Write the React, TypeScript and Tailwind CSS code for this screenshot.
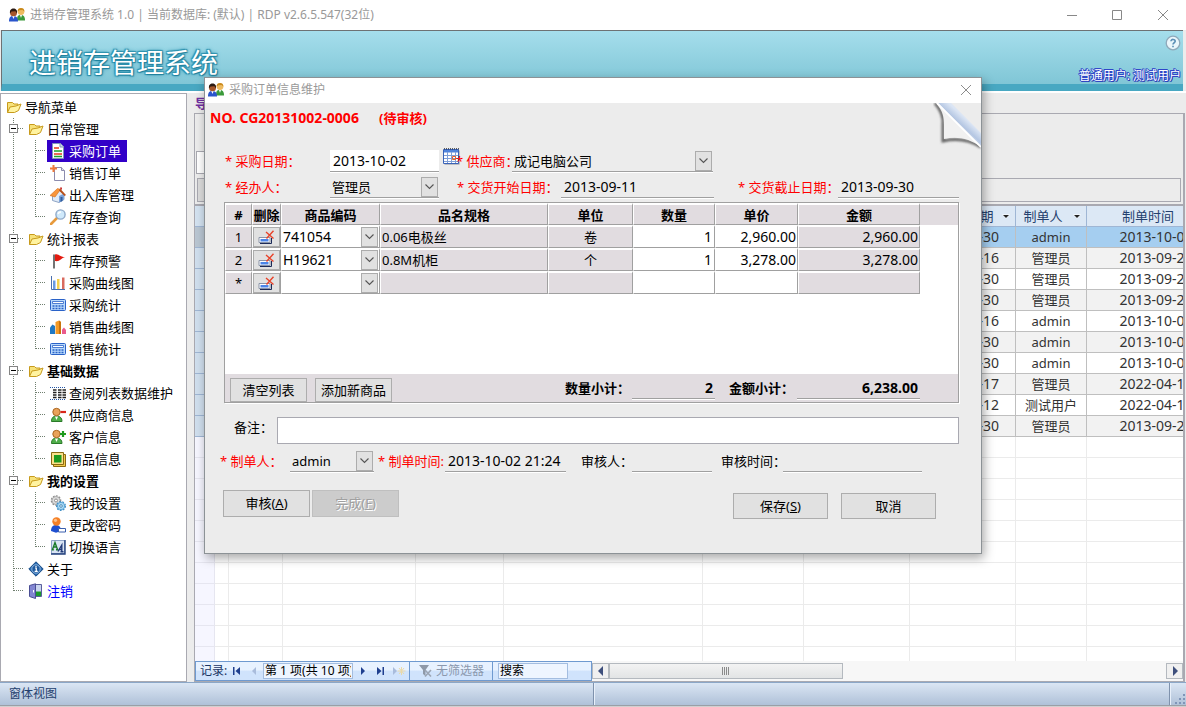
import React from "react";

type IconName =
  | "folder" | "order" | "newdoc" | "house" | "search" | "flag" | "chart" | "calc"
  | "bars" | "list" | "userMinus" | "userPlus" | "goods" | "gears" | "person" | "lang" | "about" | "door";

function Glyph({ name }: { name: IconName }) {
  switch (name) {
    case "folder":
      return (
        <>
          <path d="M1.5 13.5V3.5h5l1.5 1.5h4v2" fill="#f7e27a" stroke="#c79a1c" />
          <path d="M1.5 13.5L4 8l6-1 5-2-2.5 6.5-4 2z" fill="#fff3a0" stroke="#c79a1c" strokeLinejoin="round" />
        </>
      );
    case "order":
      return (
        <>
          <path d="M2.5.5h8l3 3v12h-11z" fill="#fff" stroke="#7f96b8" />
          <path d="M10 .5v3.500h3.500" fill="#cfd9e8" stroke="#7f96b8" />
          <path d="M4 5h5M4 11h8" stroke="#e33a1d" strokeWidth="1.300" />
          <path d="M4 8h8M4 13.500h8" stroke="#1fa32b" strokeWidth="1.300" />
        </>
      );
    case "newdoc":
      return (
        <>
          <path d="M4.500 2.500h7l3 3v10h-10z" fill="#fff" stroke="#8c8cae" />
          <path d="M11.500 2.500v3h3" fill="#dde" stroke="#8c8cae" />
          <path d="M3.500 0v7M0 3.500h7" stroke="#f07a3a" strokeWidth="2" />
        </>
      );
    case "house":
      return (
        <>
          <path d="M2.500 8v5.500L9 15.500l5-3V7L9 3z" fill="#dfeaf7" stroke="#8da3c4" />
          <path d="M9 15.500V9l5-2.500v6z" fill="#7ba3db" />
          <path d="M0 8.500L7.500 1.500l3 1L5 10z" fill="#f8953a" stroke="#d56c1a" strokeWidth=".6" />
          <path d="M10 1.500L16 8l-1.500 1L9 3.500z" fill="#b8501a" />
          <path d="M10 .5h2V3l-2-1.500z" fill="#c33" />
          <path d="M10.500 10h2v4l-2 1z" fill="#2f5d9e" />
        </>
      );
    case "search":
      return (
        <>
          <path d="M1 15l6-6" stroke="#e79a3c" strokeWidth="2.600" strokeLinecap="round" />
          <circle cx="10.500" cy="5.500" r="4.600" fill="#cfe9fb" stroke="#8fa9c9" strokeWidth="1.400" />
          <path d="M8 5a3 3 0 0 1 3-2" stroke="#fff" strokeWidth="1.400" fill="none" />
        </>
      );
    case "flag":
      return (
        <>
          <path d="M4 1.500v14" stroke="#444" strokeWidth="1.500" />
          <path d="M5 1.500c3-1.500 4 2 10 2.500-4 1-5 5-10 4z" fill="#e31b10" />
        </>
      );
    case "chart":
      return (
        <>
          <path d="M1.500 1v13.500H15" stroke="#4a6fae" fill="none" />
          <path d="M3 5.500h2.500V14H3z" fill="#6a9ae0" />
          <path d="M7 4h2.500v10H7z" fill="#f3cf4d" />
          <path d="M12 2.500h2.500V14H12z" fill="#d96a5e" />
        </>
      );
    case "calc":
      return (
        <>
          <rect x=".5" y="2.500" width="15" height="11" rx="1" fill="#b9dafc" stroke="#2a62c8" />
          <path d="M2.500 4.500h11v2h-11z" fill="#fff" stroke="#2a62c8" strokeWidth=".8" />
          <path d="M2.500 9h11M2.500 11.500h11" stroke="#2a62c8" strokeDasharray="2 1" strokeWidth="1.300" />
        </>
      );
    case "bars":
      return (
        <>
          <path d="M0 8.500l2.500-3L5 7v8H0z" fill="#1f78c4" />
          <path d="M5.500 3L9 1.500 11 3v12H5.500z" fill="#f39a26" />
          <path d="M9 1.500L11 3v12H9z" fill="#c9730d" />
          <path d="M12 10.500l2-2 2 2.500v4h-4z" fill="#ea5a8c" />
        </>
      );
    case "list":
      return (
        <>
          <path d="M0 2.500h16" stroke="#2457a8" strokeDasharray="1 1" />
          <path d="M0 14.500h16" stroke="#2457a8" strokeDasharray="1 1" />
          <path d="M3 5h3.500M8 5h3.500M12.500 5H16M3 7.500h3.500M8 7.500h3.500M12.500 7.500H16M3 10h3.500M8 10h3.500M12.500 10H16M3 12.500h3.500M8 12.500h3.500M12.500 12.500H16" stroke="#222" strokeWidth="1.300" />
        </>
      );
    case "userMinus":
    case "userPlus":
      return (
        <>
          <path d="M1.500 14.500c0-4 2-5.500 5-5.500s5.500 1.500 5.500 5.500z" fill="#4fae4a" stroke="#2a7a28" />
          <path d="M5 9.500L6.500 13 8 9.500z" fill="#fff" />
          <circle cx="6.500" cy="5" r="3.700" fill="#e9a25a" stroke="#a9651f" />
          {name === "userMinus" ? (
            <path d="M10.500 5h5.500" stroke="#d8271b" strokeWidth="2.200" />
          ) : (
            <path d="M10 5h6M13 2v6" stroke="#1d9a1d" strokeWidth="2.200" />
          )}
        </>
      );
    case "goods":
      return (
        <>
          <path d="M3.500 3.500h12v12h-12z" fill="#f2c94c" stroke="#8a6a12" />
          <path d="M1.500 1.500h12v12h-12z" fill="#fbe08a" stroke="#8a6a12" />
          <path d="M4 4h7.500v7.500H4z" fill="#1e9a1e" />
        </>
      );
    case "gears":
      return (
        <>
          <circle cx="6" cy="5.500" r="4.600" fill="none" stroke="#8d8d8d" strokeWidth="1.400" strokeDasharray="1.800 1.200" />
          <circle cx="6" cy="5.500" r="4" fill="#dedede" stroke="#9a9a9a" strokeWidth=".8" />
          <circle cx="6" cy="5.500" r="1.500" fill="#fff" stroke="#777" strokeWidth=".8" />
          <circle cx="11" cy="11" r="4.300" fill="none" stroke="#3f8fc6" strokeWidth="1.400" strokeDasharray="1.800 1.200" />
          <circle cx="11" cy="11" r="3.700" fill="#a8d8f5" stroke="#4a9bd0" strokeWidth=".8" />
          <circle cx="11" cy="11" r="1.300" fill="#fff" stroke="#2f78aa" strokeWidth=".8" />
        </>
      );
    case "person":
      return (
        <>
          <path d="M1 14c0-4 2-6 5-6s5 2 5 6l-5 1.800z" fill="#1f4fd0" />
          <circle cx="6.500" cy="4.500" r="4.200" fill="#f58026" />
          <circle cx="5.500" cy="3.300" r="1.600" fill="#fcc08a" />
          <path d="M8.500 11.500h7v3.500h-7z" fill="#fff" stroke="#3a5fae" />
        </>
      );
    case "lang":
      return (
        <>
          <path d="M1.500 1.500h13v13h-13z" fill="#d9e4f4" stroke="#8ea3c8" />
          <path d="M15 1v14H1" stroke="#23407c" strokeWidth="1.400" fill="none" />
          <path d="M2.500 10.500L5 3.500l2.500 7M3.500 8h3M1.800 10.800h2M6 10.800h2.500" stroke="#1a7a2a" strokeWidth="1.400" fill="none" />
          <path d="M8 12.500L11.800 6v6.500M9.500 10.500h2.500M10.500 12.700h3" stroke="#223a77" strokeWidth="1.400" fill="none" />
        </>
      );
    case "about":
      return (
        <>
          <path d="M8 .8L15.200 8 8 15.200.8 8z" fill="#2a6bb0" stroke="#174a85" />
          <circle cx="8" cy="8" r="4.200" fill="#1f5a9e" stroke="#a9cdf0" strokeWidth=".8" />
          <path d="M7 7h1.300v3M6.600 10.300h3.200M8 5v1" stroke="#fff" strokeWidth="1.200" fill="none" />
        </>
      );
    case "door":
      return (
        <>
          <path d="M7.500 1.500h6v12h-6z" fill="#c9d4ee" stroke="#5a5f9c" />
          <path d="M8 8.500h5V13H8z" fill="#1c9a2c" />
          <path d="M1.500 2.500L7.500.8v14.700l-6-2z" fill="#8286d2" stroke="#4a4e94" />
          <path d="M5.500 7v2.500" stroke="#fff" />
        </>
      );
  }
}

function Icon({ name }: { name: IconName }) {
  return (
    <svg viewBox="0 0 16 16" className="size-4 shrink-0" fill="none" aria-hidden="true">
      <Glyph name={name} />
    </svg>
  );
}

function UsersIcon() {
  return (
    <svg viewBox="0 0 16 14" className="h-[14px] w-4 shrink-0" aria-hidden="true">
      <path d="M8 12.500C8 8 9 7 11.800 7S16 8.500 16 12.500z" fill="#3a9a3a" />
      <path d="M11 7l1 3 1-3z" fill="#fff" />
      <circle cx="12" cy="3.600" r="3.400" fill="#eebb62" />
      <path d="M8.600 3.500C8.600 1 10 0 12 0s3.400 1 3.400 3.500L13.500 2l-3 .2z" fill="#c98a1d" />
      <path d="M0 13.500C0 9.500 1.200 8 4.200 8S9 9.500 9 13.500z" fill="#2a55cc" />
      <path d="M3.200 8L4.500 11l1.200-3z" fill="#fff" />
      <circle cx="4.500" cy="4.700" r="3.500" fill="#a5562a" />
      <path d="M1 5.500C.5 2 2.300.6 4.500.6S8.500 2 8 5.500L6.500 3.300l-4 .2z" fill="#2a1a12" />
    </svg>
  );
}

interface Branch {
  level: 0 | 1 | 2;
  label: string;
  icon: IconName;
  bold?: boolean;
  open?: boolean;
  last?: boolean;
  selected?: boolean;
  link?: boolean;
}

const tree: Branch[] = [
  { level: 0, label: "导航菜单", icon: "folder" },
  { level: 1, label: "日常管理", icon: "folder", open: true },
  { level: 2, label: "采购订单", icon: "order", selected: true },
  { level: 2, label: "销售订单", icon: "newdoc" },
  { level: 2, label: "出入库管理", icon: "house" },
  { level: 2, label: "库存查询", icon: "search", last: true },
  { level: 1, label: "统计报表", icon: "folder", open: true },
  { level: 2, label: "库存预警", icon: "flag" },
  { level: 2, label: "采购曲线图", icon: "chart" },
  { level: 2, label: "采购统计", icon: "calc" },
  { level: 2, label: "销售曲线图", icon: "bars" },
  { level: 2, label: "销售统计", icon: "calc", last: true },
  { level: 1, label: "基础数据", icon: "folder", open: true, bold: true },
  { level: 2, label: "查阅列表数据维护", icon: "list" },
  { level: 2, label: "供应商信息", icon: "userMinus" },
  { level: 2, label: "客户信息", icon: "userPlus" },
  { level: 2, label: "商品信息", icon: "goods", last: true },
  { level: 1, label: "我的设置", icon: "folder", open: true, bold: true },
  { level: 2, label: "我的设置", icon: "gears" },
  { level: 2, label: "更改密码", icon: "person" },
  { level: 2, label: "切换语言", icon: "lang", last: true },
  { level: 1, label: "关于", icon: "about" },
  { level: 1, label: "注销", icon: "door", last: true, link: true },
];

function Connector({ branch, last, expander }: { branch?: boolean; last?: boolean; expander?: boolean }) {
  return (
    <svg viewBox="0 0 22 22" className="size-[22px] shrink-0" fill="none" shapeRendering="crispEdges" aria-hidden="true">
      <path d={last ? "M11.500 0v11" : "M11.500 0v22"} stroke="#6f7f6f" strokeDasharray="1 1" />
      {branch && <path d="M12 10.500h10" stroke="#6f7f6f" strokeDasharray="1 1" />}
      {expander && (
        <>
          <path d="M7.500 6.500h8v8h-8z" fill="#fff" stroke="#848484" />
          <path d="M9 10.500h5" stroke="#000" />
        </>
      )}
    </svg>
  );
}

function Sidebar() {
  return (
    <nav className="w-[187px] shrink-0 overflow-hidden border border-[#a9a9b1] bg-white pt-[2px] pl-px">
      <ul>
        {tree.map((b, i) => (
          <li key={i} className="flex h-[22px] items-center">
            {b.level > 0 && <Connector branch={b.level === 1} last={b.level === 1 && b.last} expander={b.open} />}
            {b.level === 2 && <Connector branch last={b.last} />}
            <button
              type="button"
              className={`ml-px flex h-[22px] items-center gap-[3px] pr-[6px] pl-[3px] whitespace-nowrap ${b.selected ? "bg-[#3200c8] text-white" : b.link ? "text-[#0000ff]" : "text-black"} ${b.bold ? "font-bold" : ""}`}
            >
              <Icon name={b.icon} />
              {b.label}
            </button>
          </li>
        ))}
      </ul>
    </nav>
  );
}

const orders = [
  ["2013-09-30", "admin", "2013-10-02"],
  ["2013-09-16", "管理员", "2013-09-27"],
  ["2013-09-30", "管理员", "2013-09-27"],
  ["2013-09-30", "管理员", "2013-09-27"],
  ["2013-09-16", "admin", "2013-10-02"],
  ["2013-09-30", "admin", "2013-10-02"],
  ["2013-09-30", "admin", "2013-10-02"],
  ["2022-04-17", "管理员", "2022-04-11"],
  ["2022-04-12", "测试用户", "2022-04-11"],
  ["2013-09-30", "管理员", "2013-09-27"],
];

const leadColumns = [0, 1, 2, 3, 4, 5, 6];

function HeadCell({ label }: { label: string }) {
  return (
    <th className="h-[21px] border-r border-b border-[#9fb6d4] bg-[#dce8f5] p-0 font-normal text-[#24406e]">
      <span className="flex h-5 items-center">
        <span className="flex-1 text-center">{label}</span>
        <svg viewBox="0 0 16 16" className="size-4 shrink-0" aria-hidden="true">
          <path d="M3 6.500h8L7 10.500z" fill="#fff" />
          <path d="M4 7h6l-3 3z" fill="#222" />
        </svg>
      </span>
    </th>
  );
}

function OrdersGrid() {
  return (
    <table className="w-[1031px] table-fixed border-separate border-spacing-0 leading-4 text-[#333]">
      <colgroup>
        <col className="w-[20px]" />
        <col className="w-[14px]" />
        <col className="w-[54px]" />
        <col className="w-[133px]" />
        <col className="w-[88px]" />
        <col className="w-[199px]" />
        <col className="w-[101px]" />
        <col className="w-[106px]" />
        <col className="w-[106px]" />
        <col className="w-[71px]" />
        <col className="w-[139px]" />
      </colgroup>
      <thead>
        <tr>
          <td className="h-[21px] border-r border-b border-[#9fb6d4] bg-[#d3e2f0] p-0" />
          {leadColumns.map((c) => (
            <td key={c} className="border-r border-b border-[#9fb6d4] bg-[#dce8f5] p-0" />
          ))}
          <HeadCell label="交货截止日期" />
          <HeadCell label="制单人" />
          <HeadCell label="制单时间" />
        </tr>
      </thead>
      <tbody>
        {orders.map((row, i) => {
          const fill = i === 0 ? "bg-[#a5cef0]" : i % 2 ? "bg-[#f2f2f2]" : "bg-white";
          return (
            <tr key={i}>
              <td className={`h-[21px] border-r border-b border-[#9fb6d4] p-0 ${i === 0 ? "bg-[#b9c6d2]" : "bg-[#d0dfee]"}`} />
              {leadColumns.map((c) => (
                <td key={c} className={`border-r border-b border-[#bfbfbf] p-0 ${fill}`} />
              ))}
              {row.map((v, c) => (
                <td
                  key={c}
                  className={`overflow-hidden border-r border-b border-[#bfbfbf] p-0 text-center whitespace-nowrap ${c === 1 ? "" : "text-sm leading-4"} ${fill}`}
                >
                  {v}
                </td>
              ))}
            </tr>
          );
        })}
        {Array.from({ length: 40 }, (_, i) => (
          <tr key={i}>
            <td className="h-[21px] border-r border-b border-[#e6e6f0] bg-[#f6f6ff] p-0" />
            {Array.from({ length: 10 }, (_, c) => (
              <td key={c} className="border-r border-b border-[#ebebeb] bg-white p-0" />
            ))}
          </tr>
        ))}
      </tbody>
    </table>
  );
}

function NavButton({ label, d, faded }: { label: string; d: string; faded?: boolean }) {
  return (
    <button type="button" aria-label={label} className="flex h-[18px] w-[18px] items-center justify-center">
      <svg viewBox="0 0 10 10" className={`size-[10px] ${faded ? "text-[#a9bcdc]" : "text-[#1f3f8f]"}`} aria-hidden="true">
        <path d={d} fill="currentColor" />
      </svg>
    </button>
  );
}

function RecordBar() {
  return (
    <div className="flex h-5 shrink-0 bg-[#f4f4f4] text-black">
      <div className="flex w-[397px] shrink-0 items-center border border-[#6f9ad0] bg-linear-to-b from-[#e8f2ff] from-45% to-[#d0e3fc] to-50% text-xs">
        <span className="w-[31px] pl-1 whitespace-nowrap text-[#1b3564]">记录:</span>
        <NavButton label="第一条" d="M2 1h1.500v8H2zM9 1v8L4.500 5z" />
        <NavButton label="上一条" d="M7 1v8L3 5z" faded />
        <input aria-label="当前记录" readOnly value="第 1 项(共 10 项)" className="h-4 w-[90px] border border-[#a3bde0] bg-[#eef5ff] px-px outline-none" />
        <NavButton label="下一条" d="M4 1v8l4-4z" />
        <NavButton label="最后一条" d="M2 1v8l4.500-4zM7.500 1H9v8H7.500z" />
        <button type="button" aria-label="新记录" className="flex h-[18px] w-5 items-center justify-center">
          <svg viewBox="0 0 14 10" className="h-[10px] w-[14px]" aria-hidden="true">
            <path d="M1 1v8l4-4z" fill="#a9bcdc" />
            <path d="M9.500 1v8M5.500 5h8M7 2l5 6M12 2L7 8" stroke="#ead9a8" />
          </svg>
        </button>
        <button type="button" className="flex h-[18px] w-[84px] items-center justify-center gap-1 border-r border-l border-[#6f9ad0] text-[#8b98ad]">
          <svg viewBox="0 0 14 14" className="size-[14px]" aria-hidden="true">
            <path d="M1 1h10L7.500 6v6L5 10V6z" fill="#8f99a8" />
            <path d="M7 6l6 6.500M13 6l-6 6.500" stroke="#9ba5b4" strokeWidth="1.600" />
          </svg>
          无筛选器
        </button>
        <input aria-label="搜索" defaultValue="搜索" className="ml-[5px] h-4 w-[70px] border border-[#a3bde0] bg-[#eef5ff] px-px outline-none" />
      </div>
      <div className="flex flex-1 items-center bg-[#f7f7f7]">
        <button type="button" aria-label="向左滚动" className="flex h-4 w-[17px] items-center justify-center border border-[#b4b9bf] bg-[#f0f0f0]">
          <svg viewBox="0 0 8 10" className="h-[10px] w-2" aria-hidden="true"><path d="M6 0v10L1 5z" fill="#3e4f7c" /></svg>
        </button>
        <div className="flex flex-1">
          <div className="flex h-4 w-[42%] items-center justify-center gap-px border border-[#b4b9bf] bg-linear-to-b from-[#f3f3f3] to-[#e2e4e5]">
            <span className="h-2 w-px bg-[#8a8a8a]" />
            <span className="h-2 w-px bg-[#8a8a8a]" />
            <span className="h-2 w-px bg-[#8a8a8a]" />
            <span className="h-2 w-px bg-[#8a8a8a]" />
          </div>
        </div>
        <button type="button" aria-label="向右滚动" className="flex h-4 w-[17px] items-center justify-center border border-[#b4b9bf] bg-[#f0f0f0]">
          <svg viewBox="0 0 8 10" className="h-[10px] w-2" aria-hidden="true"><path d="M2 0v10l5-5z" fill="#3e4f7c" /></svg>
        </button>
      </div>
    </div>
  );
}

const lineBox = "border-b border-[#a0a0a0] shadow-[0_1px_0_#fff] outline-none";

function Field({ id, value, className }: { id: string; value: string; className: string }) {
  return (
    <input
      id={id}
      defaultValue={value}
      className={`h-[22px] min-w-0 shrink-0 pl-[3px] text-sm leading-5 ${lineBox} ${className}`}
    />
  );
}

function Chevron() {
  return (
    <span className="pointer-events-none absolute top-px right-px flex h-5 w-[17px] items-center justify-center border border-[#acacac] bg-[#e1e1e1]">
      <svg viewBox="0 0 9 6" className="h-[6px] w-[9px]" fill="none" aria-hidden="true">
        <path d="M.5.5l4 4 4-4" stroke="#555" strokeWidth="1.100" />
      </svg>
    </span>
  );
}

function Combo({ id, value, className, label, plain }: { id: string; value: string; className: string; label?: string; plain?: boolean }) {
  return (
    <span className={`relative flex h-[22px] shrink-0 ${plain ? "" : lineBox} ${className}`}>
      <select
        id={id}
        aria-label={label}
        defaultValue={value}
        className={`h-[21px] w-full appearance-none bg-transparent leading-5 outline-none ${plain ? "pl-px text-sm" : "pl-[2px]"}`}
      >
        <option value={value}>{value}</option>
      </select>
      <Chevron />
    </span>
  );
}

function Label({ htmlFor, text, className, required }: { htmlFor: string; text: string; className: string; required?: boolean }) {
  return (
    <label htmlFor={htmlFor} className={`shrink-0 whitespace-nowrap ${required ? "text-[#ff0000]" : ""} ${className}`}>
      {required ? "* " : ""}
      {text}
    </label>
  );
}

const items = [
  { no: "1", code: "741054", name: "0.06电极丝", unit: "卷", qty: "1", price: "2,960.00", sum: "2,960.00" },
  { no: "2", code: "H19621", name: "0.8M机柜", unit: "个", qty: "1", price: "3,278.00", sum: "3,278.00" },
  { no: "*", code: "", name: "", unit: "", qty: "", price: "", sum: "" },
];

const cellBorder = "overflow-hidden border-t-2 border-r border-b border-l border-t-white border-r-[#a0a0a0] border-b-[#a0a0a0] border-l-white p-0 whitespace-nowrap";
const cell = `h-[23px] ${cellBorder}`;

function ItemsTable() {
  return (
    <table className="w-full table-fixed border-separate border-spacing-0 leading-4">
      <colgroup>
        <col className="w-[27px]" />
        <col className="w-[29px]" />
        <col className="w-[99px]" />
        <col className="w-[168px]" />
        <col className="w-[85px]" />
        <col className="w-[82px]" />
        <col className="w-[83px]" />
        <col className="w-[122px]" />
        <col />
      </colgroup>
      <thead>
        <tr>
          {["#", "删除", "商品编码", "品名规格", "单位", "数量", "单价", "金额"].map((h) => (
            <th key={h} className={`h-[22px] bg-[#e1dce0] text-center font-bold ${cellBorder}`}>{h}</th>
          ))}
          <td className="border-t-2 border-white bg-[#e1dce0] p-0" />
        </tr>
      </thead>
      <tbody>
        {items.map((r) => (
          <tr key={r.no}>
            <td className={`${cell} bg-[#e1dce0] text-center`}>{r.no}</td>
            <td className={`${cell} bg-[#e1dce0]`}>
              <button type="button" aria-label="删除" className="flex h-5 w-full items-center justify-center border border-[#acacac] bg-[#e1e1e1]">
                <svg viewBox="0 0 17 14" className="h-[14px] w-[17px]" fill="none" aria-hidden="true">
                  <path d="M1 7.500h11v5H1z" fill="#fff" stroke="#8a94a8" />
                  <path d="M13.500 8v5.500H2" stroke="#1c2a58" />
                  <path d="M2.500 9h8v2.500h-8z" fill="#4a84e8" />
                  <path d="M8 2l7.500 6.500M15.500.8L8.500 8.500" stroke="#e8432a" strokeWidth="1.400" />
                </svg>
              </button>
            </td>
            <td className={`${cell} bg-white`}>
              <Combo id={`code-${r.no}`} label="商品编码" value={r.code} className="-mt-px -mb-px w-full" plain />
            </td>
            <td className={`${cell} bg-[#e1dce0] pl-px`}>{r.name}</td>
            <td className={`${cell} bg-[#e1dce0] text-center`}>{r.unit}</td>
            <td className={`${cell} bg-white pr-[2px] text-right text-sm leading-4`}>{r.qty}</td>
            <td className={`${cell} bg-white pr-px text-right text-sm leading-4`}>{r.price}</td>
            <td className={`${cell} bg-[#e1dce0] pr-px text-right text-sm leading-4`}>{r.sum}</td>
            <td className="p-0" />
          </tr>
        ))}
      </tbody>
    </table>
  );
}

const pushButton = "flex shrink-0 items-center justify-center border border-[#adadad] bg-[#e1e1e1] pb-px whitespace-nowrap";

function OrderDialog() {
  return (
    <section
      role="dialog"
      aria-label="采购订单信息维护"
      className="absolute top-[77px] left-[204px] flex h-[477px] w-[778px] flex-col border border-[#8c9296] bg-[#ececec] text-black shadow-[2px_4px_10px_rgba(0,0,0,0.35)]"
    >
      <header className="flex h-[25px] shrink-0 items-center bg-white pr-2 pb-px pl-[3px] text-xs text-[#999]">
        <UsersIcon />
        <h2 className="ml-[5px] flex-1">采购订单信息维护</h2>
        <button type="button" aria-label="关闭" className="flex size-[15px] items-center justify-center">
          <svg viewBox="0 0 12 12" className="size-3" aria-hidden="true"><path d="M1 1l10 10M11 1L1 11" stroke="#8c8c8c" /></svg>
        </button>
      </header>
      <svg viewBox="0 0 48 50" className="absolute top-[25px] right-0 h-[50px] w-12" fill="none" aria-hidden="true">
        <defs>
          <linearGradient id="curl" x1="22" y1="26" x2="32" y2="15" gradientUnits="userSpaceOnUse">
            <stop offset="0" stopColor="#eef3fb" />
            <stop offset=".5" stopColor="#b4c6e2" />
            <stop offset="1" stopColor="#dbe5f4" />
          </linearGradient>
          <filter id="soft" x="-20%" y="-20%" width="140%" height="140%"><feGaussianBlur stdDeviation="1" /></filter>
        </defs>
        <path d="M2 0c6 7 9 14 8 22v16c14-3 27-1 38 6" stroke="#666" strokeWidth="3" filter="url(#soft)" />
        <path d="M3 0c7 8 8 14 8 22v14c14-3 26 0 37 8L8 1z" fill="#f1f1f1" />
        <path d="M5 0h13l30 30v14z" fill="url(#curl)" />
        <path d="M4 0l44 44" stroke="#fff" strokeWidth="1.800" />
      </svg>

      <div className="flex flex-1 flex-col">
        <div className="flex h-[45px] pt-[7px] pl-[5px] leading-4 font-bold text-[#ff0000]">
          <span className="w-[169px] text-sm leading-4 whitespace-nowrap">NO. CG20131002-0006</span>
          <span>(待审核)</span>
        </div>

        <div className="flex h-[26px] items-center pl-5">
          <Label htmlFor="date" text="采购日期：" required className="w-[105px]" />
          <Field id="date" value="2013-10-02" className="w-[109px] bg-white" />
          <button type="button" aria-label="选择日期" className="ml-1 h-[18px] w-[17px] shrink-0 self-start">
            <svg viewBox="0 0 17 18" className="h-[18px] w-[17px]" fill="none" aria-hidden="true">
              <path d="M1.500 2.500h15v14h-15z" fill="#8a8f9c" />
              <path d="M.5 1.500h15v14H.5z" fill="#fff" stroke="#3a63b8" />
              <path d="M1 2h14v2.500H1z" fill="#4f83dc" />
              <path d="M1 .8h15" stroke="#222" strokeDasharray="1 1" />
              <path d="M1 7.500h14M1 10.500h14M1 13.500h14M4.500 4v11M8.500 4v11M12.500 4v11" stroke="#7f9fd8" />
              <path d="M9.500 8.500h3v3h-3z" stroke="#e8602a" />
            </svg>
          </button>
          <Label htmlFor="supplier" text="供应商：" required className="-ml-[4px] w-[56px]" />
          <Combo id="supplier" value="成记电脑公司" className="w-[201px]" />
        </div>

        <div className="flex h-[26px] items-center pl-5">
          <Label htmlFor="agent" text="经办人：" required className="w-[105px]" />
          <Combo id="agent" value="管理员" className="w-[109px]" />
          <Label htmlFor="start" text="交货开始日期：" required className="ml-[18px] w-[104px]" />
          <Field id="start" value="2013-09-11" className="w-[153px] bg-transparent" />
          <Label htmlFor="end" text="交货截止日期：" required className="ml-[24px] w-[100px]" />
          <Field id="end" value="2013-09-30" className="w-[121px] bg-transparent" />
        </div>

        <div className="mt-[2px] mr-[22px] ml-[19px] flex h-[201px] shrink-0 flex-col border border-[#a0a0a0] bg-white shadow-[1px_1px_0_#fff]">
          <div className="flex-1">
            <ItemsTable />
          </div>
          <div className="flex h-7 shrink-0 items-center bg-[#e1dce0] pl-[5px]">
            <button type="button" className={`${pushButton} mt-1 h-6 w-[77px]`}>清空列表</button>
            <button type="button" className={`${pushButton} mt-1 ml-2 h-6 w-[77px]`}>添加新商品</button>
            <label htmlFor="qty" className="ml-[173px] w-[67px] shrink-0 font-bold whitespace-nowrap">数量小计：</label>
            <input id="qty" readOnly value="2" className={`h-[21px] w-[83px] min-w-0 bg-transparent pr-[2px] text-right text-sm font-bold ${lineBox}`} />
            <label htmlFor="sum" className="ml-[14px] w-[68px] shrink-0 font-bold whitespace-nowrap">金额小计：</label>
            <input id="sum" readOnly value="6,238.00" className={`h-[21px] w-[123px] min-w-0 bg-transparent pr-[2px] text-right text-sm font-bold ${lineBox}`} />
          </div>
        </div>

        <div className="mt-[14px] mr-[22px] flex h-[27px] items-start pl-[29px]">
          <Label htmlFor="note" text="备注：" className="w-[43px] leading-5" />
          <input id="note" className="h-[27px] min-w-0 flex-1 border border-[#a9a9b1] bg-white px-1 outline-none" />
        </div>

        <div className="mt-[6px] flex h-[22px] items-center pl-[15px]">
          <Label htmlFor="maker" text="制单人：" required className="w-[70px]" />
          <Combo id="maker" value="admin" className="w-[84px]" />
          <Label htmlFor="made" text="制单时间:" required className="ml-1 w-[67px]" />
          <Field id="made" value="2013-10-02 21:24" className="w-[121px] bg-transparent" />
          <Label htmlFor="checker" text="审核人：" className="ml-[15px] w-[51px]" />
          <Field id="checker" value="" className="w-[80px] bg-transparent" />
          <Label htmlFor="checked" text="审核时间：" className="ml-[9px] w-[62px]" />
          <Field id="checked" value="" className="w-[139px] bg-transparent" />
        </div>

        <div className="mt-[18px] mr-[45px] flex h-[29px] items-center pl-[18px]">
          <button type="button" className={`${pushButton} h-[27px] w-[87px] self-start`}>审核(<u>A</u>)</button>
          <button
            type="button"
            disabled
            className="ml-[2px] flex h-[27px] w-[87px] items-center justify-center self-start border border-[#bfbfbf] bg-[#cccccc] pb-px text-[#a0a0a0] [text-shadow:1px_1px_0_#fff]"
          >
            完成(<u>F</u>)
          </button>
          <button type="button" className={`${pushButton} ml-auto h-[26px] w-[95px] self-end`}>保存(<u>S</u>)</button>
          <button type="button" className={`${pushButton} ml-[13px] h-[26px] w-[95px] self-end`}>取消</button>
        </div>
      </div>
    </section>
  );
}

export default function App() {
  return (
    <div className="relative flex h-screen flex-col overflow-hidden bg-[#ececec] font-['Noto_Sans','Noto_Sans_CJK_SC',sans-serif] text-[13px] leading-4 text-black">
      <header className="flex h-[30px] shrink-0 items-center bg-white pl-[9px] text-xs text-[#999]">
        <UsersIcon />
        <h1 className="ml-[5px] flex-1 whitespace-nowrap">进销存管理系统 1.0 | 当前数据库: (默认) | RDP v2.6.5.547(32位)</h1>
        <button type="button" aria-label="最小化" className="flex h-full w-[45px] items-center justify-center">
          <svg viewBox="0 0 12 12" className="size-3" aria-hidden="true"><path d="M1 6.500h10" stroke="#888" /></svg>
        </button>
        <button type="button" aria-label="最大化" className="flex h-full w-[46px] items-center justify-center">
          <svg viewBox="0 0 12 12" className="size-3" aria-hidden="true"><path d="M1.500 1.500h9v9h-9z" stroke="#888" fill="none" /></svg>
        </button>
        <button type="button" aria-label="关闭窗口" className="flex h-full w-[46px] items-center justify-center">
          <svg viewBox="0 0 12 12" className="size-3" aria-hidden="true"><path d="M1 1l10 10M11 1L1 11" stroke="#888" /></svg>
        </button>
      </header>

      <div className="mr-[3px] ml-px flex h-[61px] shrink-0 items-stretch justify-between border-t border-b-[7px] border-l border-t-[#6d7274] border-b-[#48a8c2] border-l-[#6d7274] bg-linear-to-b from-[#a5deec] to-[#80c6d6] pr-[2px] pl-[27px] text-white">
        <p className="pt-[14px] text-[27px] leading-9 whitespace-nowrap [text-shadow:1px_1px_1px_#1f7f9c,-1px_-1px_1px_#2f93b0,1px_-1px_1px_#2f93b0,-1px_1px_1px_#2f93b0,0_0_4px_#2a8fae]">
          进销存管理系统
        </p>
        <div className="flex flex-col items-end justify-between pt-1">
          <button type="button" aria-label="帮助" className="size-4">
            <svg viewBox="0 0 16 16" className="size-4" fill="none" aria-hidden="true">
              <circle cx="8" cy="8" r="6.800" fill="#eaf6fb" stroke="#8fa9ba" strokeWidth="1.300" />
              <path d="M6 6.300c0-2.600 4.200-2.400 4.200 0C10.200 7.800 8 7.700 8 9.500M8 10.700v1.500" stroke="#5b8fb5" strokeWidth="1.600" />
            </svg>
          </button>
          <p className="text-xs leading-4 whitespace-nowrap [text-shadow:1px_0_0_#2f45c8,-1px_0_0_#2f45c8,0_1px_0_#2f45c8,0_-1px_0_#2f45c8,1px_1px_0_#26379c,-1px_-1px_0_#2f45c8]">
            普通用户: 测试用户
          </p>
        </div>
      </div>
      <div className="h-[2px] shrink-0 bg-white" />

      <main className="flex min-h-0 flex-1">
        <Sidebar />
        <section className="flex min-w-0 flex-1 flex-col pr-px pl-[7px]">
          <h2 className="h-5 shrink-0 pt-[2px] pl-px font-bold text-[#7030a0]">导航</h2>
          <div className="flex min-h-0 flex-1 flex-col border-t border-r-2 border-b border-l border-[#a9a9b1]">
            <div className="flex h-[90px] shrink-0 flex-col justify-end pr-[2px] pb-[2px] pl-px">
              <input aria-label="查询条件" className="mb-1 h-[23px] w-[200px] border border-[#a9a9b1] bg-white outline-none" />
              <div className="ml-px h-6 border border-[#a9a9b1]">
                <div className="h-full w-[200px] bg-[#dcdcdc]" />
              </div>
            </div>
            <div className="min-h-0 flex-1 overflow-hidden border-t-2 border-[#a9a9b1] bg-white">
              <OrdersGrid />
            </div>
            <RecordBar />
          </div>
        </section>
      </main>

      <footer className="flex h-6 shrink-0 items-stretch border-t border-b border-t-[#8ba7c8] border-b-[#9a9fa6] bg-linear-to-b from-[#dbe6f4] to-[#afc1d8] text-xs text-[#24406e]">
        <span className="flex w-1/2 items-center pb-px pl-[9px]">窗体视图</span>
        <span className="flex flex-1 border-l border-[#7f92ad] shadow-[inset_1px_0_0_#e8f0fa]" />
        <span className="flex w-[17px] items-end justify-end border-l border-[#7f92ad] shadow-[inset_1px_0_0_#e8f0fa]">
          <svg viewBox="0 0 12 12" className="size-3" aria-hidden="true">
            <path d="M9 1h2v2H9zM5 5h2v2H5zM9 5h2v2H9zM1 9h2v2H1zM5 9h2v2H5zM9 9h2v2H9z" fill="#7f95b8" />
          </svg>
        </span>
      </footer>
      <div className="h-px shrink-0 bg-[#d0d0d0]" />
      <OrderDialog />
    </div>
  );
}
